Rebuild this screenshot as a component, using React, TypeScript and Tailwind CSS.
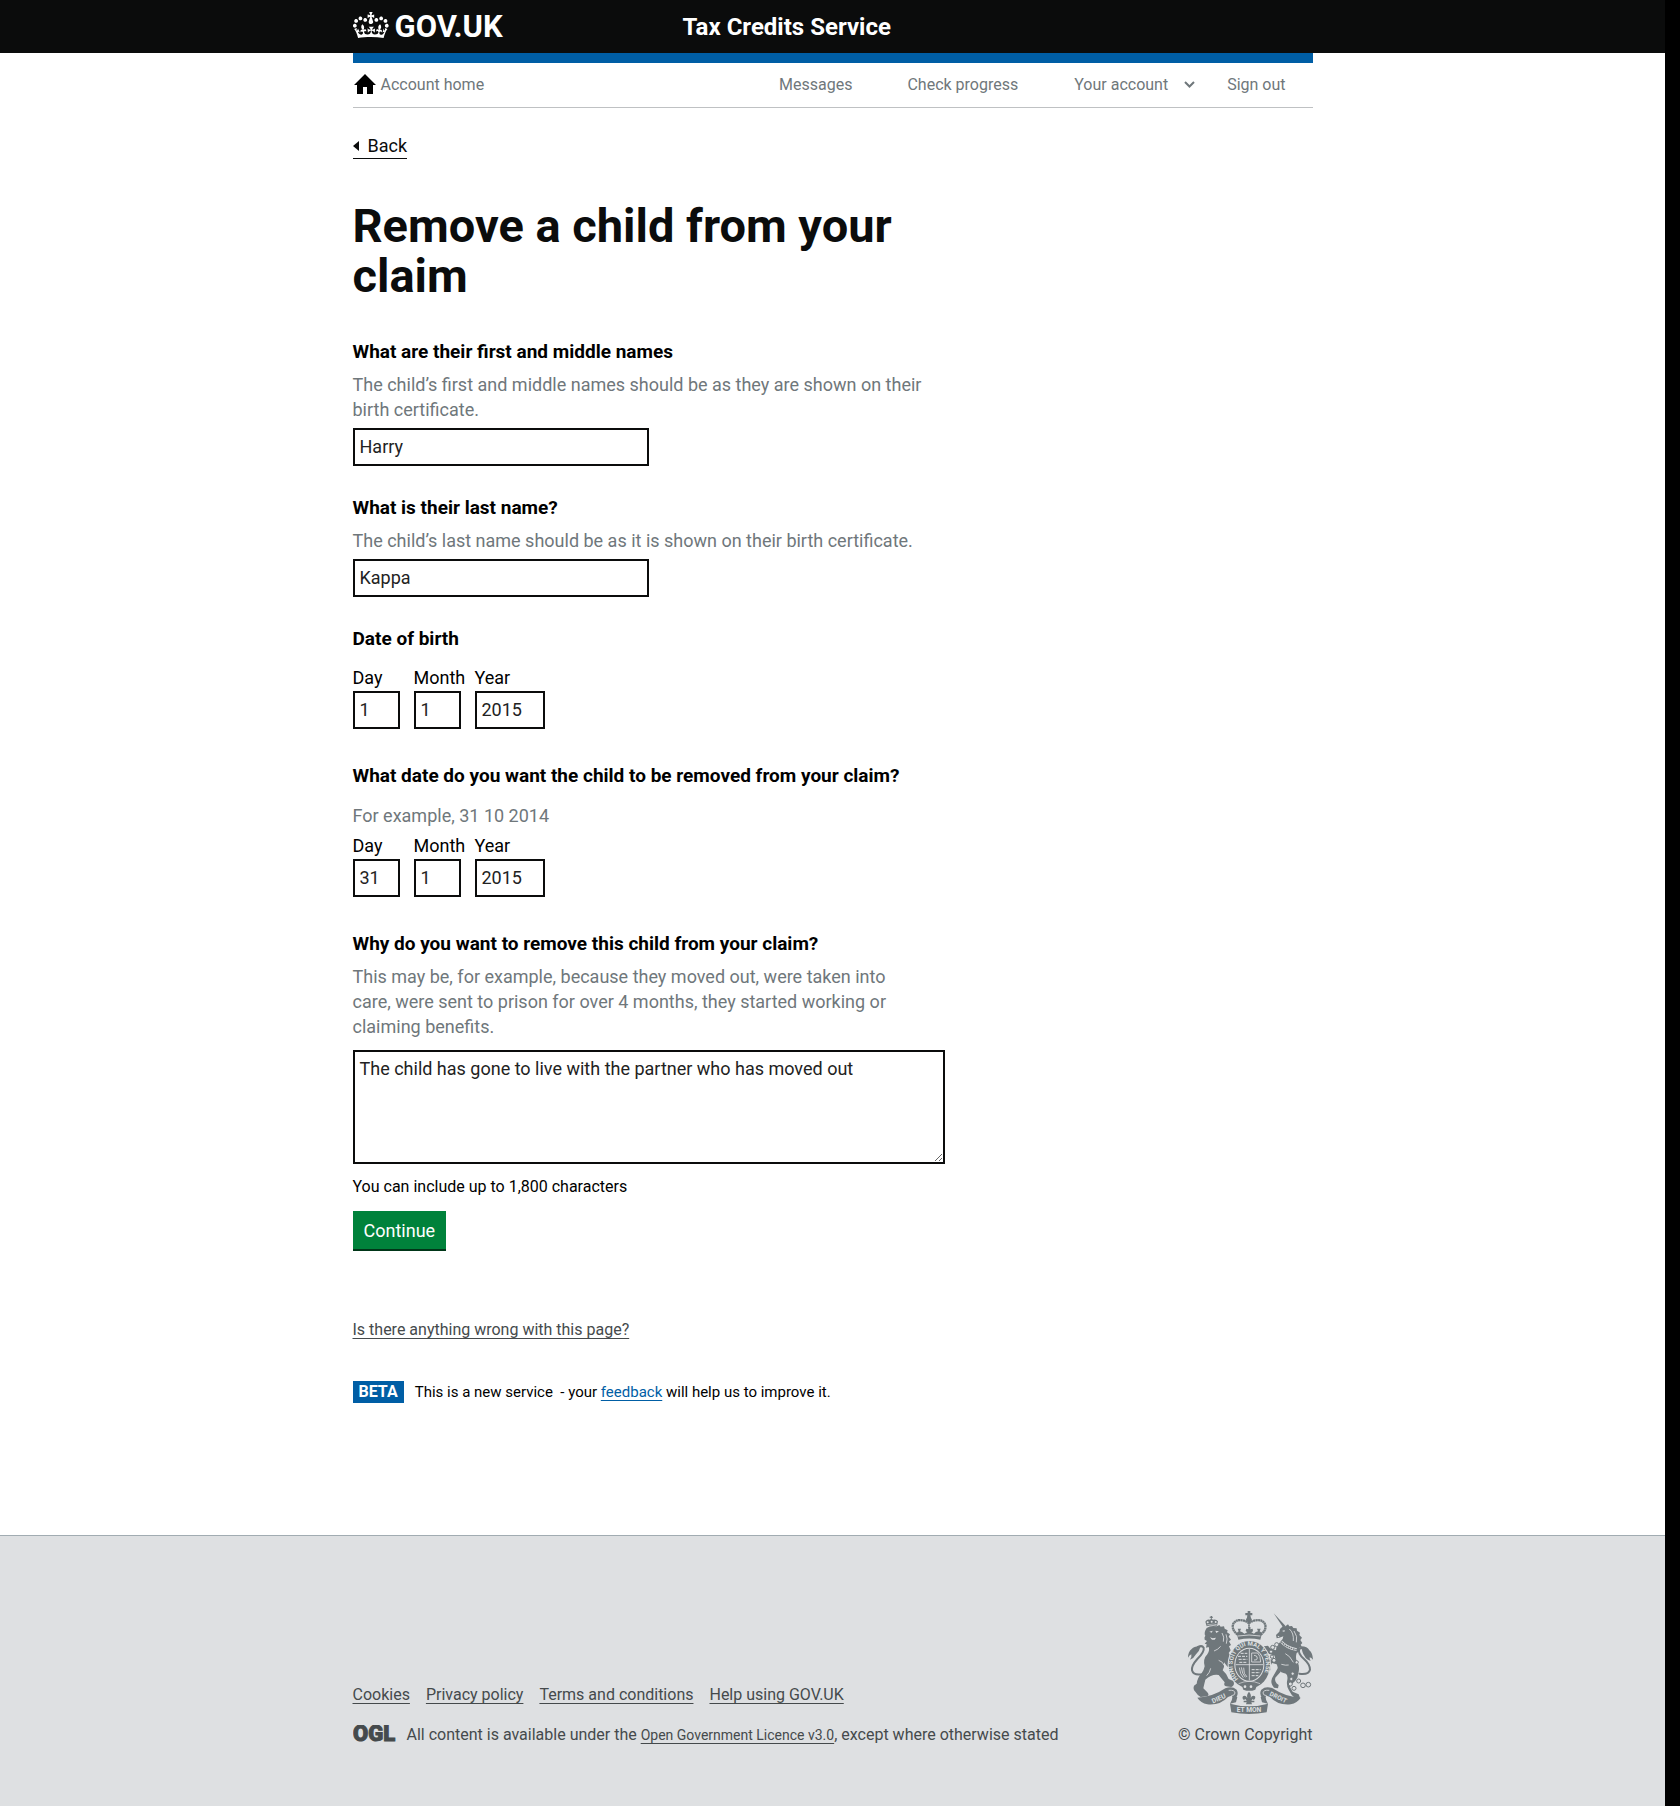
import React from 'react';

function CrownLogo() {
  return (
    <svg width="36" height="28" viewBox="0 3 36 28" fill="currentColor" aria-hidden="true">
      <path d="M6.7 12.2c1 .4 2.1-.1 2.5-1s-.1-2.1-1-2.5c-1-.4-2.1.1-2.5 1-.4 1 0 2.1 1 2.5m-4.3 2.5c1 .4 2.1-.1 2.5-1s-.1-2.1-1-2.5c-1-.4-2.1.1-2.5 1-.5 1 0 2.1 1 2.5m-1.3 4.8c1 .4 2.1-.1 2.5-1 .4-1-.1-2.1-1-2.5-1-.4-2.1.1-2.5 1-.4 1 0 2.1 1 2.5m10.4-5.8c1 .4 2.1-.1 2.5-1s-.1-2.1-1-2.5c-1-.4-2.1.1-2.5 1s0 2.1 1 2.5m17.4-1.5c-1 .4-2.1-.1-2.5-1s.1-2.1 1-2.5c1-.4 2.1.1 2.5 1 .5 1 0 2.1-1 2.5m4.3 2.5c-1 .4-2.1-.1-2.5-1s.1-2.1 1-2.5c1-.4 2.1.1 2.5 1 .5 1 0 2.1-1 2.5m1.3 4.8c-1 .4-2.1-.1-2.5-1-.4-1 .1-2.1 1-2.5 1-.4 2.1.1 2.5 1 .4 1 0 2.1-1 2.5m-10.4-5.8c-1 .4-2.1-.1-2.5-1s.1-2.1 1-2.5c1-.4 2.1.1 2.5 1s0 2.1-1 2.5m-5.3-4.9 2.4 1.3V6.5l-2.4.8c-.1-.1-.1-.2-.2-.3s1-3 1-3h-3.4l1 3c-.1.1-.2.2-.2.3-.1.1-2.4-.7-2.4-.7v3.5L17 8.8c.1.1.1.2.2.3l-1.4 4.2c-.1.2-.1.4-.1.6 0 1.1.8 2 1.9 2.2h.7c1-.2 1.9-1.1 1.9-2.1 0-.2 0-.4-.1-.6l-1.4-4.2c-.1-.2 0-.3.1-.4m-1 20.3c4.6 0 8.9.3 12.8.9 1.1-4.6 2.4-7.2 3.8-9.1l-2.6-.9c.3 1.3.3 1.9 0 2.8-.4-.4-.8-1.2-1.1-2.4l-1.2 4.2c.8-.5 1.4-.9 2-.9-1.2 2.6-2.7 3.2-3.6 3-1.2-.2-1.7-1.3-1.5-2.2.3-1.3 1.6-1.6 2.2-.1 1.2-2.4-.8-3.1-2.1-2.4 2-1.9 2.2-3.6.6-5.7-2.2 1.7-2.2 3.3-1.2 5.6-1.3-1.5-3.3-.7-2.5 1.7.9-1.4 2.1-.5 2 .8-.2 1.2-1.7 2.1-3.7 2-2.8-.2-3-2.2-3-3.7.7-.1 1.9.5 3 2l.4-4.4c-1.1 1.1-2.1 1.4-3.2 1.4.4-1.2 2.1-3 2.1-3h-5.4s1.8 1.7 2.1 3c-1.1 0-2.1-.2-3.2-1.4l.4 4.4c1.1-1.5 2.3-2.1 3-2-.1 1.6-.2 3.5-3 3.7-1.9.2-3.5-.8-3.7-2-.2-1.3 1-2.2 1.9-.8.7-2.4-1.3-3.1-2.6-1.7 1-2.3 1-4-1.2-5.6-1.6 2.1-1.4 3.8.6 5.7-1.3-.7-3.2 0-2.1 2.4.6-1.5 1.9-1.1 2.2.1.2.9-.4 1.9-1.5 2.2-1 .2-2.5-.5-3.7-3 .7 0 1.3.4 2 .9L5 20.4c-.3 1.2-.7 1.9-1.2 2.4-.3-.8-.2-1.5 0-2.8l-2.6.9C2.7 22.8 4 25.4 5.1 30c3.8-.5 8.2-.9 12.7-.9" />
    </svg>
  );
}

function HomeIcon() {
  return (
    <svg width="24" height="20" viewBox="0 0 24 20" fill="#000" aria-hidden="true">
      <path d="M12 0 23 11h-3v9h-6v-7h-4v7H4v-9H1Z" />
    </svg>
  );
}

/* Royal coat of arms: lion and unicorn either side of the garter, motto ribbon below. */
function RoyalArms() {
  const ink = '#6f777b';
  const paper = '#dee0e2';
  return (
    <svg width="125" height="103" viewBox="54 62 375 309" role="img" aria-label="Royal coat of arms">
      {/* lion and its crown */}
      <path fill={ink} d="M110 108 106 94q5-8 13-6l4-2-1-4h-3v-3h3v-2h4v2h3v3h-3l-1 4 4 2q11-2 15 5l-3 13q-15-4-31 2Z" />
      <g fill={paper}>
        <circle cx="113" cy="96" r="3" /><circle cx="125" cy="94" r="3" /><circle cx="137" cy="95" r="3" />
        <path d="M111 103q15-5 29-2v2q-15-3-28 2Z" />
      </g>
      <path fill={ink} d="M110 113Q122 104 140 108L148 104L152 109L162 108L164 115L173 120L171 126L180 132L176 139L183 148L177 153L183 164L177 168L182 180L176 188Q188 204 186 222L180 236L170 226L162 216Q164 230 158 240Q172 252 176 266L190 272Q196 284 184 290L168 288Q160 286 164 276L146 254Q126 250 106 268Q102 284 100 294L112 306Q120 316 110 318L92 320Q82 314 76 304Q68 296 72 286L80 280Q82 262 94 250Q102 240 104 228Q98 206 112 192Q120 180 116 170L108 172L110 162L104 160L111 152L104 148Q102 140 106 136Q100 128 110 113Z" />
      <g fill={paper}>
        <path d="m118 124 10-3-3 6Z" /><path d="m136 121 11 2-8 5Z" /><path d="m120 141 8 3 10-2-4 6h-8Z" />
      </g>
      <path fill="none" stroke={paper} strokeWidth="2.5" d="M156 128q8 12 4 26M168 132q6 14 1 28M152 168q-8 10-20 14M146 210q12 3 17 16M122 234q-2 12-12 22" />
      <path fill="none" stroke={ink} strokeWidth="6" strokeLinecap="round" d="M96 252Q70 256 66 240Q64 226 82 206Q104 184 101 172Q96 164 84 170" />
      <path fill={ink} d="M92 168Q74 166 65 176Q54 184 54 202Q58 194 64 192Q66 200 60 208Q72 204 78 192Q88 184 92 168Z" />
      {/* imperial crown */}
      <path fill={ink} d="M233 62h8v6h6v7h-6l2 8q5 4 1 10l-3 2h-8l-4-3q-3-6 2-10l1-7h-6v-7h7Z" />
      <path fill="none" stroke={ink} strokeWidth="7" strokeDasharray="6 1" d="M203 133q-18-14-14-31 8-16 29-12 14 4 19 9 5-6 20-9 23-3 29 14 3 18-15 29" />
      <path fill="none" stroke={ink} strokeWidth="5" strokeDasharray="5 1" d="M237 96v28" />
      <path fill={ink} d="M200 128l6-5-3-8h10l-3 8q8 2 13 7l9-4-5-4 2-7 7 2v-6h6l-1 6 7-2 1 8-5 3 8 4q5-6 12-7l-3-8h11l-3 8 7 5-5 20q-33-7-66 0Z" />
      <path fill="none" stroke={paper} strokeWidth="2.5" d="M204 137q33-6 67 0" />
      {/* unicorn */}
      <path fill={ink} d="M311 69L346 106L339 111Z" />
      <path fill={ink} d="M330 116L340 106L346 108L354 102L358 108L366 107L370 113L380 114L381 121L390 127L388 134L396 142L391 149L397 158L392 163L396 170L388 172L390 182L380 188Q376 200 380 212Q390 226 386 244L382 262Q376 274 366 280L360 290L368 304L386 312L390 322L378 326Q364 316 356 298Q348 284 352 268Q354 256 348 250Q332 248 324 236Q322 226 320 222L306 218Q300 226 302 238L296 244L286 234Q288 218 296 208L316 206L314 196L296 190L286 178L282 168L294 166L300 174L318 180Q318 166 330 156Q340 148 340 138L328 142L320 144L318 134L328 124Z" />
      <path fill={ink} d="M324 232L332 244L316 262Q312 274 326 284L324 294L312 292Q300 280 306 264Z" />
      <path fill={paper} d="m336 122 8-3-1 6ZM323 136l6 2-5 3Z" />
      <path fill="none" stroke={paper} strokeWidth="2.5" d="M358 116q14 12 12 36M372 122q12 16 7 34M346 190q14 6 24 26M334 222q14 4 22 2" />
      <path fill="none" stroke={paper} strokeWidth="8" d="M334 154q14 18 46 24" />
      <path fill="none" stroke={ink} strokeWidth="4" strokeDasharray="5 2" d="M334 154q14 18 46 24" />
      <path fill="none" stroke={ink} strokeWidth="6" strokeLinecap="round" d="M388 250Q416 254 420 238Q420 222 402 206Q382 188 388 176Q394 170 402 176" />
      <path fill={ink} d="M394 168Q412 168 418 180Q428 188 429 208Q424 202 419 201Q418 206 422 212Q408 207 404 198Q396 188 394 168Z" />
      <g fill={paper} stroke={ink} strokeWidth="3">
        <circle cx="320" cy="163" r="6" /><circle cx="308" cy="171" r="6" /><circle cx="303" cy="184" r="5" />
        <circle cx="306" cy="199" r="5" /><circle cx="312" cy="210" r="6" /><circle cx="380" cy="216" r="5" />
        <circle cx="368" cy="250" r="5" /><circle cx="364" cy="266" r="5" /><circle cx="361" cy="281" r="6" />
        <circle cx="372" cy="294" r="6" /><circle cx="386" cy="272" r="6" /><circle cx="399" cy="285" r="7" /><circle cx="415" cy="283" r="7" />
      </g>
      {/* garter and shield */}
      <ellipse cx="238" cy="223" rx="65" ry="74" fill={paper} />
      <ellipse cx="238" cy="223" rx="62" ry="71" fill={ink} />
      <ellipse cx="238" cy="223" rx="45" ry="51" fill={paper} />
      <ellipse cx="238" cy="223" rx="42" ry="48" fill={ink} />
      <path id="garter" fill="none" d="M205 266A50 57 0 1 1 271 266" />
      <text fill={paper} fontFamily="Roboto, sans-serif" fontWeight="700" fontSize="18">
        <textPath href="#garter">HONI SOIT QUI MAL Y PENSE</textPath>
      </text>
      <path fill="none" stroke={paper} strokeWidth="2.5" d="M238 176v94M197 223h82" />
      <path fill="none" stroke={paper} strokeWidth="3" strokeDasharray="9 3" d="M204 198h28M206 207h26M208 216h24M212 189h20M245 238h27M245 247h25M245 256h20" />
      <path fill="none" stroke={paper} strokeWidth="2.5" d="M245 188h18q9 8 9 27h-27ZM252 195q10 0 10 8t-10 6M208 232q2 20 12 30M214 231q2 20 12 30M221 232q-1 20 10 28" />
      <path fill={ink} d="M215 284q23-13 46 0l-5 14q-18 7-36 0Z" />
      <path fill="none" stroke={paper} strokeWidth="2" d="M206 280q32-14 64 0" />
      <circle cx="225" cy="289" r="4" fill={paper} /><circle cx="243" cy="289" r="4" fill={paper} />
      {/* fleur-de-lis */}
      <path fill={ink} d="M237 304q8 8 5 19 5-10 13-5 3 7-4 11l-3-3-4 5h9v5h-9l2 6h-18l2-6h-9v-5h9l-4-5-4 3q-7-4-3-11 7-5 13 5-3-11 5-19Z" />
      {/* ribbon */}
      <path fill={ink} d="M82 322Q128 320 166 294Q186 286 200 298Q208 312 196 324L184 316L174 320Q150 346 112 342Q92 338 82 322Z" />
      <path fill={ink} d="M392 322Q346 320 308 294Q288 286 274 298Q266 312 278 324L290 316L300 320Q324 346 362 342Q382 338 392 322Z" />
      <path fill={ink} d="M180 340Q237 356 294 340L290 366Q237 376 184 366ZM186 314L202 320L198 336L180 340Q190 326 186 314ZM288 314L272 320L276 336L294 340Q284 326 288 314Z" />
      <path fill="none" stroke={paper} strokeWidth="2.5" d="M176 300Q194 298 195 308Q194 316 184 316M298 300Q280 298 279 308Q280 316 290 316" />
      <g fill={paper} fontFamily="Roboto, sans-serif" fontWeight="700" textAnchor="middle">
        <text fontSize="20" transform="rotate(-24 147 326)" x="147" y="331">DIEU</text>
        <text fontSize="20" x="237" y="366">ET MON</text>
        <text fontSize="19" transform="rotate(26 324 322)" x="324" y="327">DROIT</text>
      </g>
    </svg>
  );
}

const labelClass = 'block text-[19px] leading-[25px] font-bold text-black';
const hintClass = 'text-lg leading-[25px] text-[#6f777b]';
const fieldClass = 'block border-2 border-[#0b0c0c] bg-white px-[5px] text-lg text-[#222] rounded-none';
const underlineClass = 'underline underline-offset-[3px] [text-decoration-skip-ink:none]';

function TextField({ id, label, hint, value }: { id: string; label: string; hint: string; value: string }) {
  return (
    <div className="mb-[29px]">
      <label htmlFor={id} className={labelClass}>{label}</label>
      <p id={`${id}-hint`} className={`mt-2 mb-1.5 max-w-[572px] ${hintClass}`}>{hint}</p>
      <input id={id} aria-describedby={`${id}-hint`} defaultValue={value} className={`h-[38px] w-1/2 pb-0.5 ${fieldClass}`} />
    </div>
  );
}

function DateField({ id, legend, hint, values }: { id: string; legend: string; hint?: string; values: [string, string, string] }) {
  const parts = [
    { name: 'Day', col: 'w-[61px]', input: 'w-[47px]' },
    { name: 'Month', col: 'w-[61px]', input: 'w-[47px]' },
    { name: 'Year', col: 'w-[71px]', input: 'w-[70px]' },
  ];
  return (
    <fieldset className="mb-[34px]">
      <legend className={labelClass}>{legend}</legend>
      {hint && <p className={`mt-[15px] ${hintClass}`}>{hint}</p>}
      <div className={hint ? 'mt-[5px] flex' : 'mt-[14px] flex'}>
        {parts.map((part, i) => (
          <div key={part.name} className={part.col}>
            <label htmlFor={`${id}-${part.name}`} className="mb-px block text-lg leading-[25px] text-black">{part.name}</label>
            <input id={`${id}-${part.name}`} defaultValue={values[i]} className={`h-[38px] pb-0.5 ${part.input} ${fieldClass}`} />
          </div>
        ))}
      </div>
    </fieldset>
  );
}

const footerLinks = ['Cookies', 'Privacy policy', 'Terms and conditions', 'Help using GOV.UK'];

export default function App() {
  return (
    <div className="min-h-screen bg-black pr-[15px] font-[Roboto,sans-serif] text-[#0b0c0c]">
      <div className="flex min-h-screen flex-col bg-white">
        <header className="bg-[#0b0c0c] text-white">
          <div className="mx-auto grid h-[53px] max-w-[960px] grid-cols-[330px_1fr] items-center">
            <a href="#" className="flex items-start gap-1.5 text-[31px] leading-8 font-bold">
              <CrownLogo />
              GOV.UK
            </a>
            <a href="#" className="text-2xl font-bold">Tax Credits Service</a>
          </div>
        </header>

        <div className="mx-auto w-full max-w-[960px]">
          <nav aria-label="Account" className="flex justify-between border-t-10 border-b border-t-[#005ea5] border-b-[#bfc1c3] py-[11px] pr-[27px] text-base leading-[22px] text-[#6f777b]">
            <a href="#" className="flex items-start gap-1">
              <HomeIcon />
              Account home
            </a>
            <div className="flex">
              <a href="#" className="mr-[55px]">Messages</a>
              <a href="#" className="mr-14">Check progress</a>
              <button type="button" className="mr-8 flex items-center gap-4">
                Your account
                <svg width="11" height="8" viewBox="0 0 11 8" fill="none" stroke="currentColor" strokeWidth="2" aria-hidden="true">
                  <path d="m1 1 4.500 4.500L10 1" />
                </svg>
              </button>
              <a href="#">Sign out</a>
            </div>
          </nav>

          <main className="max-w-[592px]">
            <a href="#" className="mt-[26px] inline-flex items-center gap-2 border-b border-[#0b0c0c] text-lg leading-6">
              <svg width="7" height="10" viewBox="0 0 7 10" aria-hidden="true"><path d="M6 0v10L0 5Z" fill="#0b0c0c" /></svg>
              Back
            </a>
            <h1 className="mt-[42px] mb-[38px] text-[47px] leading-[50px] font-bold">Remove a child from your claim</h1>
            <form>
              <TextField id="first-names" label="What are their first and middle names" hint="The child’s first and middle names should be as they are shown on their birth certificate." value="Harry" />
              <TextField id="last-name" label="What is their last name?" hint="The child’s last name should be as it is shown on their birth certificate." value="Kappa" />
              <DateField id="birth" legend="Date of birth" values={['1', '1', '2015']} />
              <DateField id="removal" legend="What date do you want the child to be removed from your claim?" hint="For example, 31 10 2014" values={['31', '1', '2015']} />
              <label htmlFor="reason" className={labelClass}>Why do you want to remove this child from your claim?</label>
              <p id="reason-hint" className={`mt-2 mb-[11px] max-w-[572px] ${hintClass}`}>
                This may be, for example, because they moved out, were taken into care, were sent to prison for over 4 months, they started working or claiming benefits.
              </p>
              <textarea id="reason" aria-describedby="reason-hint" className={`h-[114px] w-full py-1 leading-[25px] ${fieldClass}`} defaultValue="The child has gone to live with the partner who has moved out" />
              <p className="mt-3 text-base leading-[22px] text-black">You can include up to 1,800 characters</p>
              <button type="submit" className="mt-[13px] h-10 border-b-2 border-[#003618] bg-[#00823b] px-[11px] pt-0.5 text-lg text-white">Continue</button>
            </form>
            <p className="mt-[68px] text-base leading-[22px]">
              <a href="#" className={`text-[#454a4c] ${underlineClass}`}>Is there anything wrong with this page?</a>
            </p>
            <div className="mt-10 mb-[132px] flex gap-[11px] leading-[22px] text-black">
              <strong className="bg-[#005ea5] px-1.5 text-base leading-[22px] font-bold text-white">BETA</strong>
              <p className="text-[15px]">This is a new service&nbsp; - your <a href="#" className={`text-[#005ea5] ${underlineClass}`}>feedback</a> will help us to improve it.</p>
            </div>
          </main>
        </div>

        <footer className="grow border-t border-[#a1acb2] bg-[#dee0e2] text-base leading-5 text-[#454a4c]">
          <div className="mx-auto flex max-w-[960px] items-end justify-between pt-[75px] pb-[61px]">
            <div>
              <ul className="mb-5 flex gap-4">
                {footerLinks.map((link) => (
                  <li key={link}><a href="#" className={underlineClass}>{link}</a></li>
                ))}
              </ul>
              <div className="flex gap-2">
                <svg width="46" height="20" viewBox="0 0 46 20" role="img" aria-label="Open Government Licence">
                  <text x="0" y="16" fill="#454a4c" stroke="#454a4c" fontFamily="Roboto, sans-serif" fontSize="22" fontWeight="900">OGL</text>
                </svg>
                <p>All content is available under the <a href="#" className={`text-sm leading-5 ${underlineClass}`}>Open Government Licence v3.0</a>, except where otherwise stated</p>
              </div>
            </div>
            <a href="#" className="flex flex-col items-end gap-[11px]">
              <RoyalArms />
              © Crown Copyright
            </a>
          </div>
        </footer>
      </div>
    </div>
  );
}
